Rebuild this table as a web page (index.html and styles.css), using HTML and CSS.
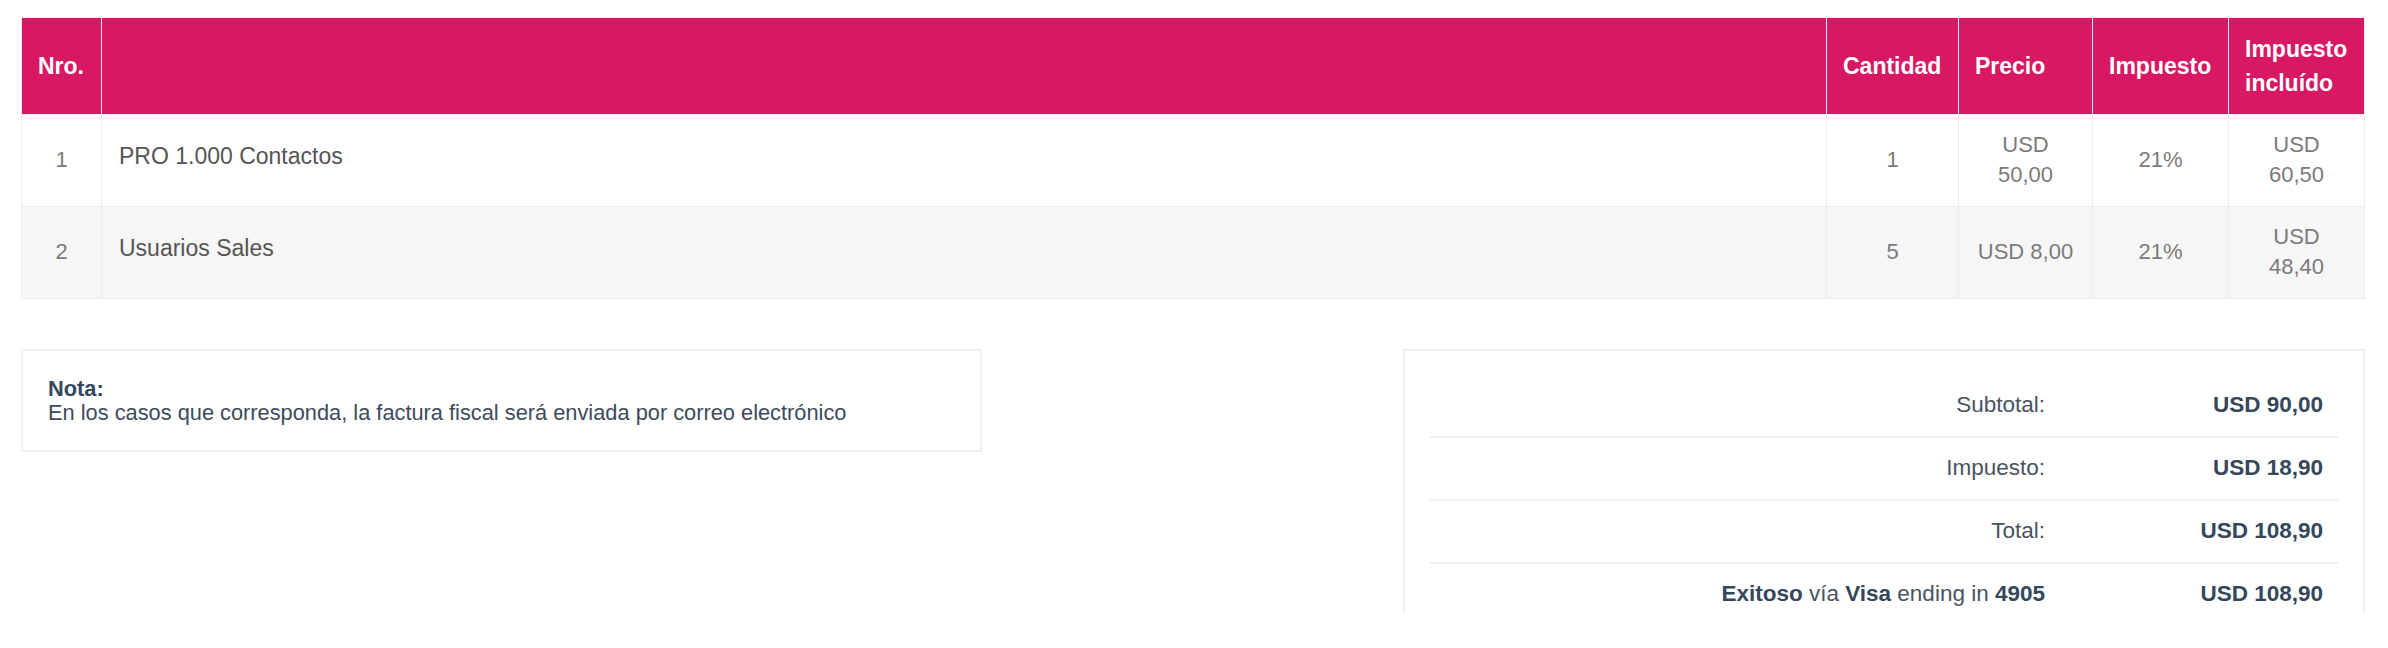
FILE: index.html
```html
<!DOCTYPE html>
<html lang="es">
<head>
<meta charset="utf-8">
<title>Factura</title>
<link rel="stylesheet" href="styles.css">
</head>
<body>
<div class="page">
  <table class="items">
    <colgroup>
      <col class="c-nro">
      <col class="c-desc">
      <col class="c-qty">
      <col class="c-price">
      <col class="c-tax">
      <col class="c-incl">
    </colgroup>
    <thead>
      <tr>
        <th>Nro.</th>
        <th></th>
        <th>Cantidad</th>
        <th>Precio</th>
        <th>Impuesto</th>
        <th>Impuesto incluído</th>
      </tr>
    </thead>
    <tbody>
      <tr>
        <td class="num">1</td>
        <td class="desc">PRO 1.000 Contactos</td>
        <td class="num">1</td>
        <td class="num">USD 50,00</td>
        <td class="num">21%</td>
        <td class="num">USD 60,50</td>
      </tr>
      <tr class="alt">
        <td class="num">2</td>
        <td class="desc">Usuarios Sales</td>
        <td class="num">5</td>
        <td class="num">USD 8,00</td>
        <td class="num">21%</td>
        <td class="num">USD 48,40</td>
      </tr>
    </tbody>
  </table>

  <div class="bottom">
    <div class="note">
      <strong>Nota:</strong><br>
      En los casos que corresponda, la factura fiscal será enviada por correo electrónico
    </div>
    <div class="spacer"></div>
    <div class="totals">
      <div class="trow">
        <div class="tlabel">Subtotal:</div>
        <div class="tvalue">USD 90,00</div>
      </div>
      <div class="trow">
        <div class="tlabel">Impuesto:</div>
        <div class="tvalue">USD 18,90</div>
      </div>
      <div class="trow">
        <div class="tlabel">Total:</div>
        <div class="tvalue">USD 108,90</div>
      </div>
      <div class="trow last">
        <div class="tlabel"><b>Exitoso</b> vía <b>Visa</b> ending in <b>4905</b></div>
        <div class="tvalue">USD 108,90</div>
      </div>
    </div>
  </div>
</div>
</body>
</html>
```

FILE: styles.css
```css
html, body {
  margin: 0;
  padding: 0;
  background: #ffffff;
}

body {
  font-family: "Liberation Sans", Arial, Helvetica, sans-serif;
}

.page {
  height: 613px;
  overflow: hidden;
  padding: 17px 23px 0 21px;
  box-sizing: border-box;
}

.items {
  width: 100%;
  border-collapse: collapse;
  table-layout: fixed;
}

.c-nro { width: 80px; }
.c-qty { width: 132px; }
.c-price { width: 134px; }
.c-tax { width: 136px; }
.c-incl { width: 136px; }

.items th,
.items td {
  border: 1px solid #ececec;
}

.items th {
  background: #d81862;
  color: #ffffff;
  font-weight: bold;
  font-size: 23px;
  line-height: 34px;
  text-align: left;
  padding: 14px 16px;
  vertical-align: middle;
}

.items td {
  font-size: 22px;
  line-height: 30.4px;
  padding: 15px 16px;
  vertical-align: middle;
  color: #7b7b7b;
}

.items td.num {
  text-align: center;
}

.items td.desc {
  font-size: 23px;
  color: #555555;
  padding-bottom: 24px;
  padding-top: 15px;
  padding-left: 17px;
}

.items tr.alt td {
  background: #f6f6f6;
}

.bottom {
  display: grid;
  grid-template-columns: 961px 1fr 962px;
  align-items: start;
  margin-top: 50px;
}

.note {
  border: 2px solid #f0f0f0;
  padding: 26px 25px 25px;
  font-size: 21.8px;
  line-height: 24px;
  color: #3d4b5c;
}

.note strong {
  color: #34475b;
}

.totals {
  border: 2px solid #f0f0f0;
  padding: 24px 25px 20px;
  color: #4a5361;
}

.trow {
  display: grid;
  grid-template-columns: 1fr 278px;
  height: 61px;
  align-items: center;
  border-bottom: 2px solid #f0f0f0;
  font-size: 22.5px;
}

.trow.last {
  border-bottom: none;
}

.tlabel {
  text-align: right;
  padding-right: 15px;
}

.tlabel b {
  color: #34475b;
}

.tvalue {
  text-align: right;
  padding-right: 15px;
  font-weight: bold;
  color: #34475b;
}
```
